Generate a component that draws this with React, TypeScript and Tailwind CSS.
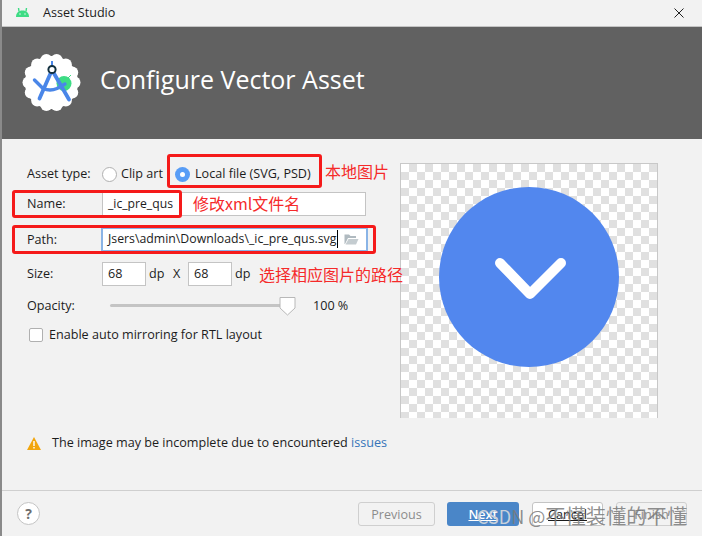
const font = "font-['Open_Sans','Noto_Sans',sans-serif]";
const cjk = "font-['Noto_Sans_CJK_SC',sans-serif]";

function Scallop() {
  const bumps = Array.from({ length: 14 }, (_, i) => {
    const a = (i / 14) * Math.PI * 2;
    return { x: 29.5 + Math.cos(a) * 23, y: 29.5 + Math.sin(a) * 23 };
  });
  return (
    <svg width="60" height="60" viewBox="0 0 60 60">
      <circle cx="29.5" cy="29.5" r="26.5" fill="#fff" />
      {bumps.map((b, i) => (
        <circle key={i} cx={b.x} cy={b.y} r="6" fill="#fff" />
      ))}
      <circle cx="42" cy="30.5" r="7.5" fill="#3ddc84" />
      <path d="M46 25 L49 22" stroke="#3ddc84" strokeWidth="1" />
      <path d="M30 17 L17.5 45.5 M30 17 L47 46.5" stroke="#4a86e8" strokeWidth="3.8" strokeLinecap="round" fill="none" />
      <path d="M30 8 V13" stroke="#4a86e8" strokeWidth="2" />
      <path d="M12.5 27 L21 35.5 Q28 38.5 35 35.5 L43 31" stroke="#4a86e8" strokeWidth="3.4" strokeLinecap="round" strokeLinejoin="round" fill="none" />
      <circle cx="30" cy="16.5" r="3.6" fill="#fff" stroke="#12303f" strokeWidth="2" />
    </svg>
  );
}

function Annot({ className }: { className: string }) {
  return <div className={`absolute border-[3px] border-[#f51a1a] rounded-[3px] ${className}`} />;
}

function Note({ className, children }: { className: string; children: string }) {
  return <div className={`absolute ${cjk} text-[#f52a2a] text-[16px] leading-5 whitespace-nowrap ${className}`}>{children}</div>;
}

export default function App() {
  return (
    <div className={`relative w-[702px] h-[536px] overflow-hidden bg-[#f2f2f2] border-l-2 border-[#8a8a8a] text-[12.6px] text-[#1c1c1c] ${font}`}>
      <div className="h-[27px] flex items-center border-b border-[#c4c4c4] pl-[14px] pr-[20px]">
        <svg width="13" height="9" viewBox="0 0 13 9" className="mr-[14px] mb-[2px]">
          <path d="M0 9 C0 5 2.5 2.5 6.5 2.5 C10.5 2.5 13 5 13 9 Z" fill="#3ddc84" />
          <path d="M3 3.5 L2.5 0 M10 3.5 L10.5 0" stroke="#3ddc84" strokeWidth="1.4" />
          <circle cx="4" cy="6" r="0.7" fill="#fff" />
          <circle cx="9" cy="6" r="0.7" fill="#fff" />
        </svg>
        <span>Asset Studio</span>
        <svg width="10" height="10" viewBox="0 0 10 10" className="ml-auto mr-[-2px]">
          <path d="M0.5 0.5 L9.5 9.5 M9.5 0.5 L0.5 9.5" stroke="#222" strokeWidth="1" />
        </svg>
      </div>
      <div className="h-[112px] bg-[#616161] flex items-center pl-[20px]">
        <Scallop />
        <span className="ml-[18px] mb-[7px] text-[25px] text-white">Configure Vector Asset</span>
      </div>

      <div className="flex h-[351px]">
        <div className="w-[398px] pl-[25px] pt-[24px]">
          <div className="h-[22px] flex items-center">
            <span className="w-[75px]">Asset type:</span>
            <span className="w-[15px] h-[15px] rounded-full bg-white border border-[#b0b0b0] mr-[4px]" />
            <span className="w-[54px]">Clip art</span>
            <span className="w-[15px] h-[15px] rounded-full bg-[#589df6] flex items-center justify-center mr-[5px]">
              <span className="w-[5px] h-[5px] rounded-full bg-white" />
            </span>
            <span>Local file (SVG, PSD)</span>
          </div>
          <div className="h-[24px] mt-[7px] flex items-center">
            <span className="w-[75px]">Name:</span>
            <div className="w-[264px] h-[24px] bg-white border border-[#c4c4c4] flex items-center pl-[5px] text-[12.2px]">_ic_pre_qus</div>
          </div>
          <div className="h-[24px] mt-[11px] flex items-center">
            <span className="w-[74px] pt-[2px]">Path:</span>
            <div className="w-[267px] h-[25px] bg-white border-2 border-[#8ab4e6] flex items-center pl-[5px] overflow-hidden">
              <span className="border-r border-black pr-[1px] whitespace-nowrap text-[12.3px]">Jsers\admin\Downloads\_ic_pre_qus.svg</span>
              <svg width="15" height="12" viewBox="0 0 15 12" className="ml-[6px] shrink-0">
                <path d="M0.5 11 V1.5 H5 L6.5 3 H12 V5 H4 L1 11 Z" fill="#b0bac0" />
                <path d="M4.5 6 H14.5 L12 11.5 H1.5 Z" fill="#c4ccd0" />
              </svg>
            </div>
          </div>
          <div className="h-[24px] mt-[11px] flex items-center">
            <span className="w-[75px]">Size:</span>
            <div className="w-[44px] h-[24px] bg-white border border-[#c4c4c4] flex items-center pl-[5px]">68</div>
            <span className="ml-[3px] w-[24px]">dp</span>
            <span className="w-[15px]">X</span>
            <div className="w-[44px] h-[24px] bg-white border border-[#c4c4c4] flex items-center pl-[5px]">68</div>
            <span className="ml-[3px]">dp</span>
          </div>
          <div className="h-[22px] mt-[8px] flex items-center">
            <span className="w-[83px] pt-[2px]">Opacity:</span>
            <div className="relative w-[178px] h-[3px] bg-[#c4c4c4] rounded-full">
              <svg width="17" height="20" viewBox="0 0 17 20" className="absolute left-[169px] top-[-8px]">
                <path d="M1 1.5 H16 V12 L8.5 19 L1 12 Z" fill="#fff" stroke="#b8b8b8" strokeWidth="1" />
              </svg>
            </div>
            <span className="ml-[25px] pt-[2px]">100 %</span>
          </div>
          <div className="h-[20px] mt-[9px] flex items-center pl-[2px]">
            <span className="w-[14px] h-[14px] bg-white border border-[#b0b0b0] rounded-[2px] mr-[6px]" />
            <span>Enable auto mirroring for RTL layout</span>
          </div>
          <div className="h-[18px] mt-[89px] flex items-center">
            <svg width="14" height="13" viewBox="0 0 14 13" className="mr-[11px]">
              <path d="M7 0 L14 13 H0 Z" fill="#f2a60d" />
              <path d="M6.3 4 H7.7 V9 H6.3 Z M6.3 10 H7.7 V11.5 H6.3 Z" fill="#fff" />
            </svg>
            <span>The image may be incomplete due to encountered <span className="text-[#3574b8]">issues</span></span>
          </div>
        </div>
        <div className="pt-[24px]">
          <div className="w-[258px] h-[255px] border border-[#c8c8c8] border-b-0 bg-[repeating-conic-gradient(#e0e0e0_0_25%,#ffffff_0_50%)] bg-[length:16px_16px] pl-[37px] pt-[22px]">
            <svg width="182" height="182" viewBox="0 0 182 182">
              <circle cx="91" cy="91" r="90" fill="#5287ee" />
              <path d="M62 77 L92 108 L123 77" stroke="#fff" strokeWidth="10" strokeLinecap="round" strokeLinejoin="round" fill="none" />
            </svg>
          </div>
        </div>
      </div>

      <div className="h-[46px] border-t border-[#cfcfcf] flex items-center pl-[15px]">
        <span className="w-[23px] h-[23px] rounded-full bg-white border border-[#c4c4c4] flex items-center justify-center text-[#6e6e6e] font-bold text-[14px]">?</span>
        <span className="ml-[318px] w-[77px] h-[24px] border border-[#cfcfcf] rounded-[3px] flex items-center justify-center pt-[3px] text-[#8c8c8c]">Previous</span>
        <span className="ml-[12px] w-[72px] h-[24px] bg-[#4a86c8] rounded-[3px] flex items-center justify-center pt-[3px] text-white font-semibold underline">Next</span>
        <span className="ml-[13px] w-[71px] h-[24px] bg-white border border-[#c4c4c4] rounded-[3px] flex items-center justify-center pt-[3px] underline">Cancel</span>
        <span className="ml-[13px] w-[71px] h-[24px] border border-[#cfcfcf] rounded-[3px] flex items-center justify-center pt-[3px] text-[#8c8c8c]">Finish</span>
      </div>

      <Annot className="left-[165px] top-[154px] w-[155px] h-[34px]" />
      <Annot className="left-[10px] top-[190px] w-[170px] h-[28px]" />
      <Annot className="left-[10px] top-[225px] w-[364px] h-[29px]" />
      <Note className="left-[323px] top-[161px]">本地图片</Note>
      <Note className="left-[191px] top-[193px]">修改xml文件名</Note>
      <Note className="left-[257px] top-[264px]">选择相应图片的路径</Note>
      <div className={`absolute left-[475px] top-[503px] ${cjk} text-[20.3px] leading-6 text-[#7a7a7a]/85 whitespace-nowrap`}>
        <span className="text-[18px] text-[#c8d0da]">CSD</span>
        <span className="text-[18px]">N @</span>
        不懂装懂的不懂
      </div>
    </div>
  );
}
